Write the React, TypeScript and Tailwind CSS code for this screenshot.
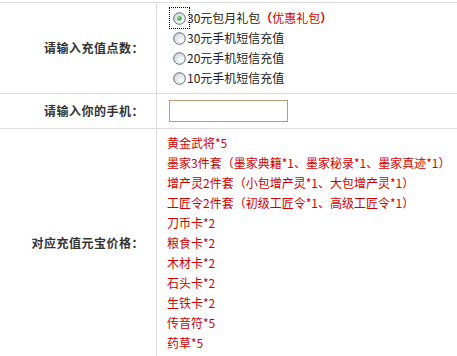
const font = { fontFamily: '"Noto Sans CJK SC", "Noto Sans", sans-serif' };

const Radio = ({ checked }: { checked?: boolean }) => (
  <svg width="13" height="13" viewBox="0 0 13 13" className="shrink-0">
    <defs>
      <radialGradient id="rg" cx="0.65" cy="0.7" r="0.7">
        <stop offset="0" stopColor="#ffffff" />
        <stop offset="1" stopColor="#d4d8de" />
      </radialGradient>
    </defs>
    <circle cx="6.5" cy="6.5" r="5.8" fill="url(#rg)" stroke="#5a6e85" strokeWidth="1" />
    {checked && <circle cx="6.5" cy="6.5" r="2.3" fill="#3cae3c" />}
    {checked && <circle cx="6" cy="6" r="0.9" fill="#8ee08e" />}
  </svg>
);

const options = [
  { text: "30元包月礼包", extra: "优惠礼包", checked: true },
  { text: "30元手机短信充值" },
  { text: "20元手机短信充值" },
  { text: "10元手机短信充值" },
];

const items = [
  "黄金武将*5",
  "墨家3件套（墨家典籍*1、墨家秘录*1、墨家真迹*1）",
  "增产灵2件套（小包增产灵*1、大包增产灵*1）",
  "工匠令2件套（初级工匠令*1、高级工匠令*1）",
  "刀币卡*2",
  "粮食卡*2",
  "木材卡*2",
  "石头卡*2",
  "生铁卡*2",
  "传音符*5",
  "药草*5",
];

const Label = ({ children }: { children: string }) => (
  <div className="w-[157px] shrink-0 flex items-center justify-end pr-[12px] font-bold tracking-[0.5px] text-[#333] border-r border-[#dcdcdc]">
    {children}
  </div>
);

export default function App() {
  return (
    <div className="w-[457px] h-[356px] overflow-hidden bg-white text-[12px] leading-[20px]" style={font}>
      <div className="h-[2px]" />
      <div className="flex border-t border-[#dcdcdc] h-[91px]">
        <Label>请输入充值点数：</Label>
        <div className="flex flex-col pt-[5px] pl-[14px]">
          {options.map((o, i) => (
            <div key={i} className="flex items-center h-[20px] text-[#222]">
              <div className={"flex items-center justify-center w-[19px] h-[20px] -ml-[1px] " + (o.checked ? "outline outline-1 outline-dotted outline-black" : "")}>
                <Radio checked={o.checked} />
              </div>
              <span className="-ml-[2px]">{o.text}</span>
              {o.extra && (
                <span className="text-[#cc0000]">
                  <b>（</b>
                  {o.extra}
                  <b>）</b>
                </span>
              )}
            </div>
          ))}
        </div>
      </div>
      <div className="flex border-t border-[#dcdcdc] h-[35px]">
        <Label>请输入你的手机：</Label>
        <div className="flex items-center pl-[12px]">
          <input className="w-[119px] h-[22px] border border-[#c09a74] outline-none px-1" />
        </div>
      </div>
      <div className="flex border-t border-[#dcdcdc] h-[228px] shrink-0">
        <Label>对应充值元宝价格：</Label>
        <div className="flex flex-col pt-[4px] pl-[10px] text-[#cc0000] whitespace-nowrap">
          {items.map((t, i) => (
            <div key={i}>{t}</div>
          ))}
        </div>
      </div>
    </div>
  );
}
